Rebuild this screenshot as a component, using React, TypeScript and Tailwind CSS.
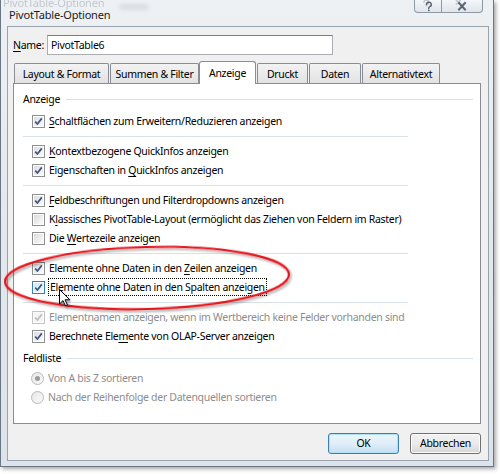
import React from "react";

const FONT = { fontFamily: '"Segoe UI", "Noto Sans", "Open Sans", sans-serif' };

function U({ children }: { children: React.ReactNode }) {
  return <span className="underline underline-offset-[2px] decoration-[1px]">{children}</span>;
}

function CheckBox({ checked = true, disabled = false, hover = false }: { checked?: boolean; disabled?: boolean; hover?: boolean }) {
  const border = disabled ? "border-[#c4c4c4]" : hover ? "border-[#3c7fb1]" : "border-[#8e8f8f]";
  const inner = disabled
    ? "bg-[#f4f4f4]"
    : hover
    ? "bg-gradient-to-br from-[#cde8f8] to-[#f2f9fd]"
    : "bg-gradient-to-br from-[#dcdcdc] to-[#fbfbfb]";
  return (
    <span className={`relative flex h-[13px] w-[13px] shrink-0 items-center justify-center border bg-white ${border}`}>
      <span className={`h-[9px] w-[9px] ${inner}`} />
      {checked && (
        <svg className="absolute left-0 top-0" width="11" height="11" viewBox="0 0 11 11">
          <path
            d="M2.2 5.6 L4.4 8 L8.8 2.4"
            fill="none"
            stroke={disabled ? "#bdbdbd" : "#3f5286"}
            strokeWidth="1.7"
            strokeLinejoin="round"
          />
        </svg>
      )}
    </span>
  );
}

function Radio({ checked = false }: { checked?: boolean }) {
  return (
    <span className="flex h-[13px] w-[13px] shrink-0 items-center justify-center rounded-full border border-[#b9b9b9] bg-gradient-to-br from-[#e6e6e6] to-[#fafafa]">
      {checked && <span className="h-[5px] w-[5px] rounded-full bg-[#9a9a9a]" />}
    </span>
  );
}

function Row({
  children,
  checked = true,
  disabled = false,
  hover = false,
}: {
  children: React.ReactNode;
  checked?: boolean;
  disabled?: boolean;
  hover?: boolean;
}) {
  return (
    <div className="flex h-[19px] items-center pl-[18px]">
      <CheckBox checked={checked} disabled={disabled} hover={hover} />
      <span className={`ml-[4px] whitespace-nowrap ${disabled ? "text-[#8d8d8d]" : "text-black"}`}>{children}</span>
    </div>
  );
}

function Sep({ top, bottom }: { top: number; bottom: number }) {
  return (
    <div className="pl-[9px]" style={{ paddingTop: top, paddingBottom: bottom }}>
      <div className="h-px w-[385px] bg-[#d9e1e8]" />
    </div>
  );
}

function GroupLabel({ children }: { children: React.ReactNode }) {
  return (
    <div className="flex h-[16px] items-center pl-[9px] pr-[7px]">
      <span className="whitespace-nowrap text-black">{children}</span>
      <div className="ml-[6px] h-px flex-1 bg-[#d9e1e8]" />
    </div>
  );
}

function Tab({ label, w, ml, selected = false }: { label: string; w: number; ml: number; selected?: boolean }) {
  if (selected) {
    return (
      <div
        className="relative z-10 -mb-px flex h-[23px] items-center justify-center rounded-t-[3px] border border-b-0 border-[#898c95] bg-white text-black"
        style={{ width: w, marginLeft: ml }}
      >
        {label}
      </div>
    );
  }
  return (
    <div
      className="flex h-[20px] items-center justify-center rounded-t-[2px] border border-b-0 border-[#898c95] bg-gradient-to-b from-[#f3f3f3] to-[#e2e2e2] pt-px text-black"
      style={{ width: w, marginLeft: ml }}
    >
      {label}
    </div>
  );
}

export default function App() {
  return (
    <div
      className="relative h-[474px] w-[500px] overflow-hidden bg-white text-[10.5px] leading-none tracking-[-0.3px]"
      style={FONT}
    >
      {/* Window frame */}
      <div className="h-[467px] w-[494px] border border-t-0 border-[#6b7683] bg-gradient-to-b from-[#eef1f4] via-[#e3e8ee] to-[#dde3ea] shadow-[2px_2px_4px_rgba(0,0,0,0.35)]">
        {/* Title bar */}
        <div className="relative flex h-[26px] items-start justify-between">
          <div className="relative pl-[8px] pt-[9px] text-[11px] tracking-[-0.2px] text-[#1a1a1a]">
            <span className="absolute left-[2px] top-[-3px] whitespace-nowrap text-[#c3c8ce] blur-[0.4px]">PivotTable-Optionen</span>
            <span className="relative whitespace-nowrap">PivotTable-Optionen</span>
          </div>
          <div className="absolute left-[118px] top-[4px] h-[6px] w-[30px] rounded-full bg-[#c9d0d8] opacity-60 blur-[2px]" />
          <div className="mr-[10px] -mt-px flex h-[14px] rounded-b-[4px] border border-t-0 border-[#8e99a5] bg-gradient-to-b from-[#f6f8fa] to-[#dfe5eb]">
            <div className="flex w-[27px] items-center justify-center border-r border-[#8e99a5]">
              <svg width="14" height="13" viewBox="0 0 14 13">
                <g fill="none" strokeWidth="1.5" strokeLinecap="round">
                  <path d="M3 3.2 a2.3 2.2 0 1 1 3.2 2 c-0.9 0.4 -1 0.9 -1 1.8" stroke="#c0c7ce" />
                  <path d="M5.5 5.5 a2.4 2.3 0 1 1 3.3 2.1 c-0.9 0.4 -1.1 0.9 -1.1 1.8" stroke="#5d6672" />
                </g>
                <rect x="7" y="10.6" width="1.6" height="1.6" fill="#5d6672" />
              </svg>
            </div>
            <div className="flex w-[40px] items-center justify-center">
              <svg width="16" height="13" viewBox="0 0 16 13">
                <g strokeWidth="1.6" strokeLinecap="square">
                  <path d="M2.5 1.5 L6 4.8 M6 1.5 L2.5 4.8" stroke="#c0c7ce" />
                  <path d="M5 4 L11 10.5 M11 4 L5 10.5" stroke="#5d6672" strokeWidth="2" />
                </g>
              </svg>
            </div>
          </div>
        </div>

        {/* Client area */}
        <div className="ml-[6px] h-[435px] w-[482px] border border-[#98a3ae] bg-[#f0f0f0]">
          {/* Name row */}
          <div className="mt-[8px] flex h-[20px] items-center">
            <span className="w-[39px] pl-[5px] text-black">
              <U>N</U>ame:
            </span>
            <div className="flex h-[20px] w-[286px] items-center border border-[#abadb3] border-t-[#7a7c84] bg-white pl-[3px] text-black">
              PivotTable6
            </div>
          </div>

          {/* Tabs */}
          <div className="mt-[6px] flex h-[22px] items-end">
            <Tab label="Layout & Format" w={95} ml={6} />
            <Tab label="Summen & Filter" w={89} ml={1} />
            <Tab label="Anzeige" w={57} ml={0} selected />
            <Tab label="Druckt" w={51} ml={1} />
            <Tab label="Daten" w={52} ml={1} />
            <Tab label="Alternativtext" w={78} ml={1} />
          </div>

          {/* Panel */}
          <div className="ml-[5px] h-[341px] w-[468px] border border-[#898c95] bg-white pt-[7px]">
            <GroupLabel>Anzeige</GroupLabel>
            <div className="h-[5px]" />
            <Row>
              <U>S</U>chaltflächen zum Erweitern/Reduzieren anzeigen
            </Row>
            <Sep top={5} bottom={5} />
            <Row>
              <U>K</U>ontextbezogene QuickInfos anzeigen
            </Row>
            <Row>
              Eigenschaften in <U>Q</U>uickInfos anzeigen
            </Row>
            <Sep top={5} bottom={5} />
            <Row>
              <U>F</U>eldbeschriftungen und Filterdropdowns anzeigen
            </Row>
            <Row checked={false}>
              K<U>l</U>assisches PivotTable-Layout (ermöglicht das Ziehen von Feldern im Raster)
            </Row>
            <Row checked={false}>
              Die <U>W</U>ertezeile anzeigen
            </Row>
            <Sep top={5} bottom={5} />
            <Row>
              Elemente ohne Daten in den <U>Z</U>eilen anzeigen
            </Row>
            <Row hover>
              <span className="-ml-px border border-dotted border-black px-px py-[1px]">
                Elemente ohne Daten in den Spalten anzeigen
              </span>
            </Row>
            <Sep top={5} bottom={5} />
            <Row disabled>Elementnamen anzeigen, wenn im Wertbereich keine Felder vorhanden sind</Row>
            <Row>
              Berechnete Ele<U>m</U>ente von OLAP-Server anzeigen
            </Row>
            <div className="h-[4px]" />
            <GroupLabel>Feldliste</GroupLabel>
            <div className="h-[3px]" />
            <div className="flex h-[19px] items-center pl-[17px]">
              <Radio checked />
              <span className="ml-[4px] whitespace-nowrap text-[#8d8d8d]">Von A bis Z sortieren</span>
            </div>
            <div className="flex h-[19px] items-center pl-[17px]">
              <Radio />
              <span className="ml-[4px] whitespace-nowrap text-[#8d8d8d]">
                Nach der Reihenfolge der Datenquellen sortieren
              </span>
            </div>
          </div>

          {/* Buttons */}
          <div className="mt-[9px] flex justify-end gap-[11px] pr-[7px]">
            <button className="flex h-[21px] w-[71px] items-center justify-center rounded-[3px] border border-[#3c7fb1] bg-gradient-to-b from-[#eaf6fd] via-[#e0eef8] to-[#c4e0f3] text-black shadow-[inset_0_0_0_1px_#aee0f8]">
              OK
            </button>
            <button className="flex h-[21px] w-[71px] items-center justify-center rounded-[3px] border border-[#707070] bg-gradient-to-b from-[#f2f2f2] via-[#ebebeb] to-[#d6d6d6] text-black shadow-[inset_0_0_0_1px_#fcfcfc]">
              Abbrechen
            </button>
          </div>
        </div>
      </div>

      {/* Red annotation ellipse */}
      <svg className="pointer-events-none absolute left-0 top-0" width="500" height="474" viewBox="0 0 500 474">
        <defs>
          <filter id="sh" x="-10%" y="-30%" width="120%" height="160%">
            <feDropShadow dx="1.5" dy="2" stdDeviation="1.2" floodColor="#000" floodOpacity="0.35" />
          </filter>
        </defs>
        <ellipse
          cx="147"
          cy="278"
          rx="142"
          ry="31"
          transform="rotate(-1.5 147 278)"
          fill="none"
          stroke="#e4141c"
          strokeWidth="2.2"
          filter="url(#sh)"
        />
        {/* mouse cursor */}
        <g transform="translate(59 289)" filter="url(#sh)">
          <path
            d="M0.5 0.5 L0.5 15 L4 11.6 L6.4 16.8 L8.4 15.9 L6 10.8 L10.8 10.8 Z"
            fill="#fff"
            stroke="#000"
            strokeWidth="1"
            strokeLinejoin="round"
          />
        </g>
      </svg>
    </div>
  );
}
